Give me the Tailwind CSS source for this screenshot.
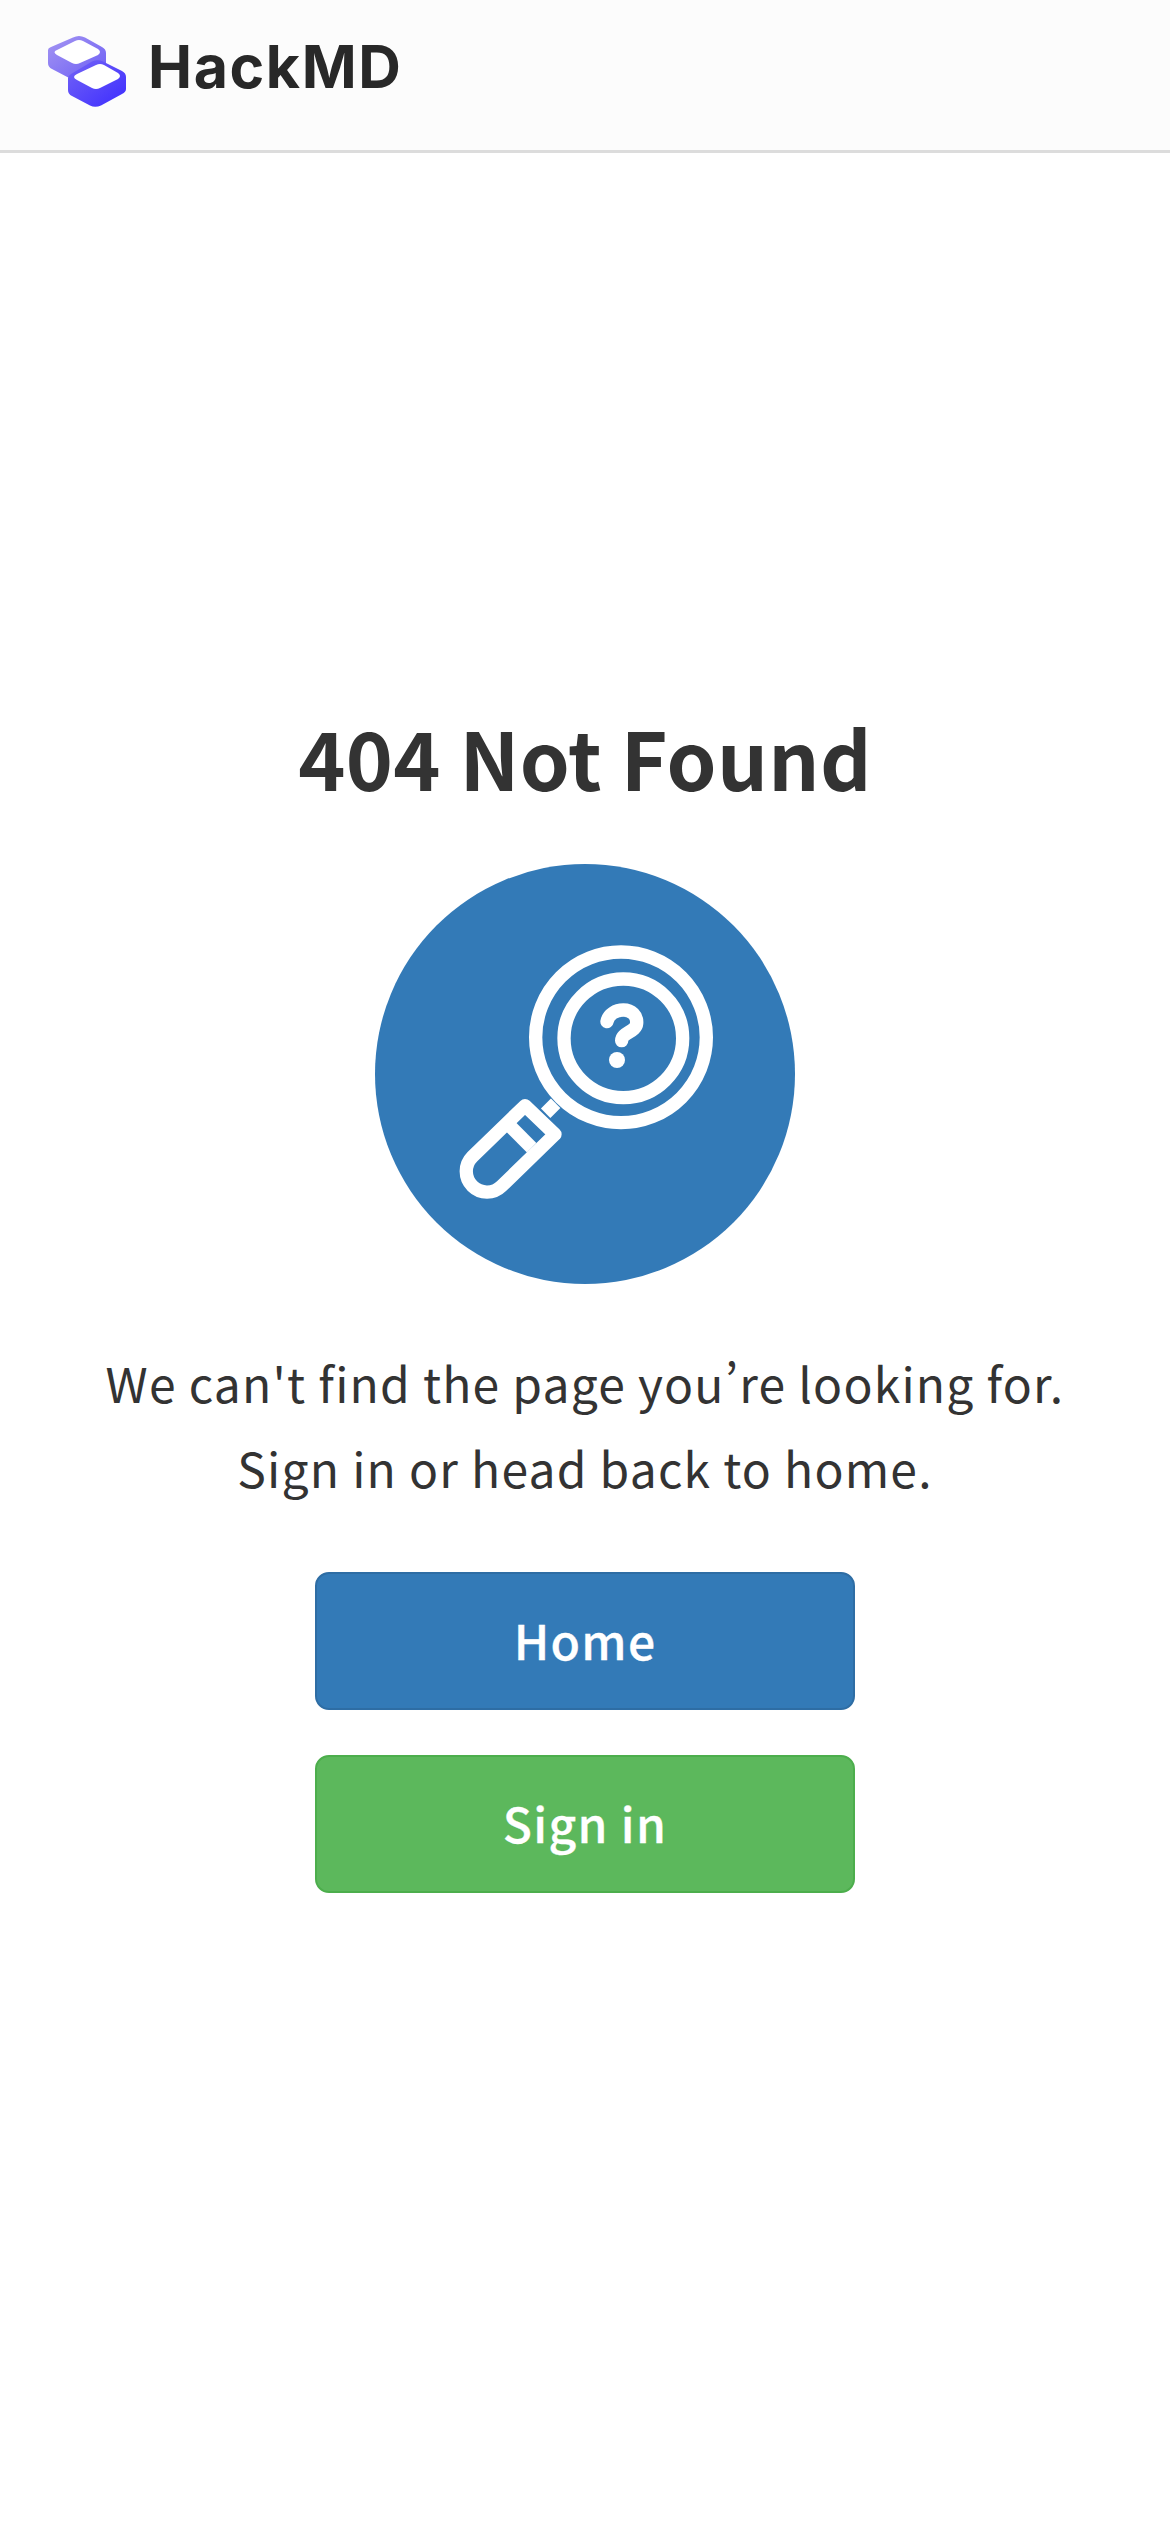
<!doctype html>
<html lang="en">
<head>
<meta charset="utf-8">
<script src="https://cdn.jsdelivr.net/npm/@tailwindcss/browser@4"></script>
<title>404 Not Found</title>
</head>
<body class="bg-white font-['Noto_Sans_CJK_SC','Noto_Sans',sans-serif] text-[#333]">
<div class="w-[1170px] h-[2532px] overflow-hidden">
  <header class="h-[153px] bg-[#fcfcfc] border-b-[3px] border-[#dcdcdc] flex items-center pl-[48px] pb-[6px] gap-[24px]">
    <svg class="w-[78px] h-[72px] shrink-0" viewBox="48 36 78 72" aria-hidden="true">
      <defs>
        <linearGradient id="g1" x1="0" y1="0" x2="1" y2="1"><stop offset="0" stop-color="#a596f2"/><stop offset="1" stop-color="#6a5cf5"/></linearGradient>
        <linearGradient id="g2" x1="0" y1="0" x2="1" y2="1"><stop offset="0" stop-color="#7464f6"/><stop offset="1" stop-color="#3c2cff"/></linearGradient>
      </defs>
      <path d="M73 37.5Q79 34.5 85 37.5L102 47Q106 49 106 53V66L90 80L73 80L52 69Q48 67 48 63V50Q48 48 51 47Z" fill="url(#g1)"/>
      <path d="M57 50L75 41Q79 39 83 41L98 49Q102 52 98 55L80 63Q76 65 72 63L57 55Q52 52 57 50Z" fill="#fff"/>
      <path d="M92 61.5Q98 59 103 61.5L122 71Q126 73 126 77V89Q126 92 122 94L101 105.5Q95 108 90 105.5L72 96Q68 94 68 90V78Q68 76 71 74Z" fill="url(#g2)"/>
      <path d="M77 74L96 65Q100 63 104 65L118 73Q122 76 118 79L100 88Q96 90 92 88L77 80Q71 77 77 74Z" fill="#fff"/>
    </svg>
    <span class="relative -top-[6px] -ml-[2px] font-['Inter',sans-serif] font-bold text-[59px] leading-none text-[#282828] tracking-[1.6px]">HackMD</span>
  </header>
  <main class="flex flex-col items-center">
    <h1 class="mt-[544px] text-[80px] leading-[118px] font-bold tracking-[0.4px] text-[#333]">404 Not Found</h1>
    <svg class="mt-[49px] w-[420px] h-[420px]" viewBox="45 42 1260 1260" aria-hidden="true">
      <circle cx="675" cy="672" r="630" fill="#337ab7"/>
      <g fill="none" stroke="#fff" stroke-width="40" stroke-linejoin="round" stroke-linecap="round">
        <circle cx="783" cy="562" r="256"/>
        <circle cx="790" cy="565" r="178"/>
        <path d="M587 760L557 790" stroke-linecap="butt"/>
        <path d="M495 767L585 853L425 1008A62 62 0 0 1 337 920Z"/>
        <path d="M450 828L515 893" stroke-linecap="butt"/>
        <path d="M741 515C745 492 768 480 790 480C815 480 832 497 830 520C828 546 785 548 785 572"/>
      </g>
      <circle cx="771" cy="630" r="24" fill="#fff"/>
    </svg>
    <p class="mt-[56px] text-[48px] leading-[85px] tracking-[1.2px] text-center whitespace-nowrap [font-feature-settings:'pwid']">We can't find the page you’re looking for.<br>Sign in or head back to home.</p>
    <a class="mt-[62px] w-[540px] h-[138px] pb-[5px] flex items-center justify-center rounded-[14px] border-2 border-[#2e6da4] bg-[#337ab7] text-white text-[48px] tracking-[1.3px] font-medium [-webkit-text-stroke:0.3px_white]">Home</a>
    <a class="mt-[45px] w-[540px] h-[138px] pb-[5px] flex items-center justify-center rounded-[14px] border-2 border-[#4cae4c] bg-[#5cb85c] text-white text-[48px] tracking-[1.3px] font-medium [-webkit-text-stroke:0.3px_white]">Sign in</a>
  </main>
</div>
</body>
</html>
